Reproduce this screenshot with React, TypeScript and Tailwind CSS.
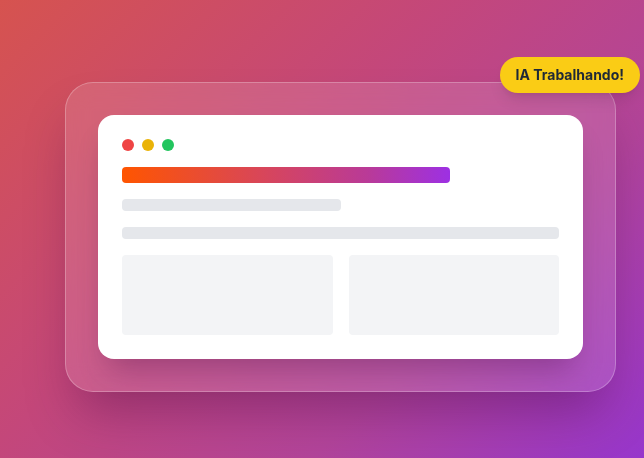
export default function App() {
  return (
    <div
      className="w-[644px] h-[458px] overflow-hidden bg-[linear-gradient(135deg,#d6534f_0%,#c4477a_40%,#b2449a_70%,#9736cc_100%)] pl-[65px] pt-[82px]"
      style={{ fontFamily: 'Inter, "Noto Sans", sans-serif' }}
    >
      <div className="relative w-[551px] rounded-[28px] border border-white/25 bg-white/[0.12] p-8 shadow-[0_30px_50px_-12px_rgba(60,0,60,0.35)] backdrop-blur-md">
        <div className="rounded-2xl bg-white p-6 shadow-[0_20px_30px_-10px_rgba(60,0,60,0.3)]">
          <div className="flex gap-2">
            <span className="h-3 w-3 rounded-full bg-[#ef4444]" />
            <span className="h-3 w-3 rounded-full bg-[#eab308]" />
            <span className="h-3 w-3 rounded-full bg-[#22c55e]" />
          </div>
          <div className="mt-4 h-4 w-3/4 rounded bg-[linear-gradient(90deg,#ff5500,#d6455e_45%,#b93a98_75%,#9d30e3)]" />
          <div className="mt-4 h-3 w-1/2 rounded bg-[#e5e7eb]" />
          <div className="mt-4 h-3 w-full rounded bg-[#e5e7eb]" />
          <div className="mt-4 grid grid-cols-2 gap-4">
            <div className="h-20 rounded bg-[#f3f4f6]" />
            <div className="h-20 rounded bg-[#f3f4f6]" />
          </div>
        </div>
        <div className="absolute -right-[25px] -top-[26px] rounded-full bg-[#facc15] px-4 py-2 text-sm font-bold text-[#1f2937] shadow-lg">
          IA Trabalhando!
        </div>
      </div>
    </div>
  )
}
